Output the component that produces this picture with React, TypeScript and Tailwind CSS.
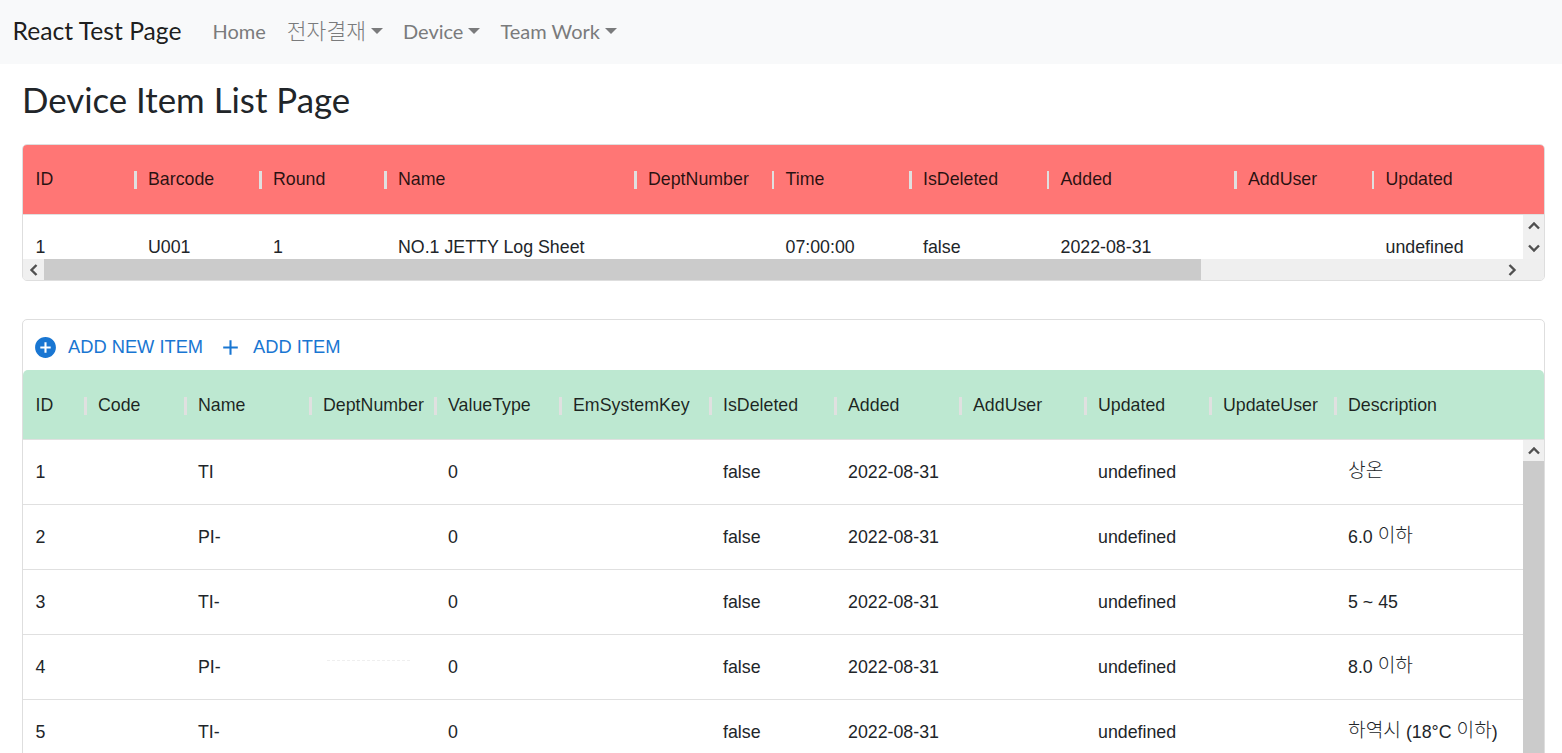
import type { ReactNode } from "react"

const deviceCols = "grid-cols-[112.5px_125px_125px_250px_137.5px_137.5px_137.5px_187.5px_137.5px_137.5px]"
const itemCols = "grid-cols-[62.5px_100px_125px_125px_125px_150px_125px_125px_125px_125px_125px_187px]"

const deviceHeaders = ["ID", "Barcode", "Round", "Name", "DeptNumber", "Time", "IsDeleted", "Added", "AddUser", "Updated"]
const deviceRow = ["1", "U001", "1", "NO.1 JETTY Log Sheet", "", "07:00:00", "false", "2022-08-31", "", "undefined"]

const itemHeaders = ["ID", "Code", "Name", "DeptNumber", "ValueType", "EmSystemKey", "IsDeleted", "Added", "AddUser", "Updated", "UpdateUser", "Description"]

// hangul runs wider and sits higher than the latin text next to it
function Ko({ children }: { children: ReactNode }) {
  return <span className="relative -top-[1px] text-[19.2px] font-light">{children}</span>
}

const itemRows = [
  { id: "1", name: "TI", desc: <Ko>상온</Ko> },
  { id: "2", name: "PI-", desc: <>6.0 <Ko>이하</Ko></> },
  { id: "3", name: "TI-", desc: "5 ~ 45" },
  { id: "4", name: "PI-", desc: <>8.0 <Ko>이하</Ko></> },
  { id: "5", name: "TI-", desc: <><Ko>하역시</Ko> (18°C <Ko>이하</Ko>)</> },
]

function Caret() {
  return <span className="ml-[5px] inline-block border-x-[6px] border-t-[6px] border-x-transparent border-t-current align-[5px]" />
}

function NavLink({ label, caret, wide }: { label: string; caret?: boolean; wide?: boolean }) {
  return (
    <a className="block cursor-pointer px-[10px] text-[20px] leading-[30px] text-[#7a7b7c]">
      <span className={wide ? "text-[21.5px] font-light" : ""}>{label}</span>
      {caret && <Caret />}
    </a>
  )
}

function Chevron({ d }: { d: string }) {
  return (
    <svg width="12" height="12" viewBox="0 0 12 12" fill="none" stroke="#505050" strokeWidth="2.4">
      <path d={d} />
    </svg>
  )
}

function ScrollButton({ d }: { d: string }) {
  return (
    <div className="flex h-[21px] w-[21px] shrink-0 items-center justify-center bg-[#f0f0f0]">
      <Chevron d={d} />
    </div>
  )
}

const UP = "M1 8.5 6 3.5 11 8.5"
const DOWN = "M1 3.5 6 8.5 11 3.5"
const LEFT = "M8.5 1 3.5 6 8.5 11"
const RIGHT = "M3.5 1 8.5 6 3.5 11"

function HeaderRow({ cols, labels, color }: { cols: string; labels: string[]; color: string }) {
  return (
    <div className={`grid h-[70px] shrink-0 overflow-hidden border-b border-[#e0e0e0] text-[17.8px] text-black/85 ${cols} ${color}`}>
      {labels.map((label, i) => (
        <div key={label} className="flex items-center whitespace-nowrap">
          <span className={`-ml-[1.5px] h-[18px] w-[2.5px] ${i === 0 ? "" : "bg-[#e0e0e0]"}`} />
          <span className="ml-[11.5px]">{label}</span>
        </div>
      ))}
    </div>
  )
}

function DeviceTable() {
  return (
    <div className="ml-[22px] mr-[17px] mt-[22px] overflow-hidden rounded-[5px] border border-[#dedede]">
      <HeaderRow cols={deviceCols} labels={deviceHeaders} color="bg-[#ff7675]" />
      <div className="flex h-[44px]">
        <div className={`grid h-[65px] min-w-0 flex-1 overflow-hidden ${deviceCols}`}>
          {deviceRow.map((value, i) => (
            <div key={i} className="flex items-center whitespace-nowrap pl-[12.5px] text-[17.8px] text-[#212529]">
              {value}
            </div>
          ))}
        </div>
        <div className="flex w-[21px] shrink-0 flex-col justify-between bg-[#f0f0f0]">
          <div className="flex h-[22px] items-center justify-center"><Chevron d={UP} /></div>
          <div className="flex h-[22px] items-center justify-center"><Chevron d={DOWN} /></div>
        </div>
      </div>
      <div className="flex h-[21px] bg-[#efefef]">
        <ScrollButton d={LEFT} />
        <div className="w-[1157px] bg-[#cbcbcb]" />
        <div className="flex-1" />
        <div className="flex h-[21px] w-[42px] items-center justify-start pl-[4px]"><Chevron d={RIGHT} /></div>
      </div>
    </div>
  )
}

function ItemToolbar() {
  return (
    <div className="flex h-[50px] shrink-0 items-center pl-[10px] pt-[4px] text-[18.3px] text-[#1976d2]">
      <button className="flex items-center">
        <svg width="25" height="25" viewBox="0 0 24 24" fill="currentColor">
          <path d="M12 2C6.48 2 2 6.48 2 12s4.48 10 10 10 10-4.48 10-10S17.52 2 12 2zm5 11h-4v4h-2v-4H7v-2h4V7h2v4h4v2z" />
        </svg>
        <span className="ml-[10px]">ADD NEW ITEM</span>
      </button>
      <button className="ml-[15px] flex items-center">
        <svg width="25" height="25" viewBox="0 0 24 24" fill="currentColor">
          <path d="M19 13h-6v6h-2v-6H5v-2h6V5h2v6h6v2z" />
        </svg>
        <span className="ml-[10px]">ADD ITEM</span>
      </button>
    </div>
  )
}

function ItemTable() {
  return (
    <div className="ml-[22px] mr-[17px] mt-[38px] flex h-[500px] flex-col overflow-hidden rounded-[5px] border border-[#dedede]">
      <ItemToolbar />
      <div className="overflow-hidden rounded-t-[5px] pt-0 [&>div]:pt-[2px]">
        <HeaderRow cols={itemCols} labels={itemHeaders} color="bg-[#bde8d1]" />
      </div>
      <div className="flex min-h-0 flex-1">
        <div className="min-w-0 flex-1 overflow-hidden">
          {itemRows.map((row) => (
            <div key={row.id} className={`grid h-[65px] items-center border-b border-[#e0e0e0] text-[17.8px] text-[#212529] ${itemCols}`}>
              <span className="pl-[12.5px]">{row.id}</span>
              <span />
              <span className="pl-[12.5px]">{row.name}</span>
              <span className="pl-[16px]">
                {row.id === "4" && <span className="mb-[14px] block w-[83px] border-t border-dashed border-[#efefef]" />}
              </span>
              <span className="pl-[12.5px]">0</span>
              <span />
              <span className="pl-[12.5px]">false</span>
              <span className="pl-[12.5px]">2022-08-31</span>
              <span />
              <span className="pl-[12.5px]">undefined</span>
              <span />
              <span className="whitespace-nowrap pl-[12.5px]">{row.desc}</span>
            </div>
          ))}
        </div>
        <div className="flex w-[21px] shrink-0 flex-col bg-[#cbcbcb]">
          <ScrollButton d={UP} />
        </div>
      </div>
    </div>
  )
}

export default function App() {
  return (
    <div className="h-screen overflow-hidden bg-white font-['Liberation_Sans','Noto_Sans_CJK_KR',sans-serif]">
      <nav className="flex h-[64px] items-center bg-[#f8f9fa] pb-[3px] pl-[12.5px] font-['Lato','Noto_Sans_CJK_KR',sans-serif]">
        <a className="mr-[21px] text-[24.7px] leading-[38px] text-black/90">React Test Page</a>
        <NavLink label="Home" />
        <span className="ml-[1px]" />
        <NavLink label="전자결재" caret wide />
        <NavLink label="Device" caret />
        <NavLink label="Team Work" caret />
      </nav>
      <h3 className="ml-[22px] mt-[14px] font-['Lato','Noto_Sans_CJK_KR',sans-serif] text-[34.8px] leading-[44px] text-[#212529]">
        Device Item List Page
      </h3>
      <DeviceTable />
      <ItemTable />
    </div>
  )
}
